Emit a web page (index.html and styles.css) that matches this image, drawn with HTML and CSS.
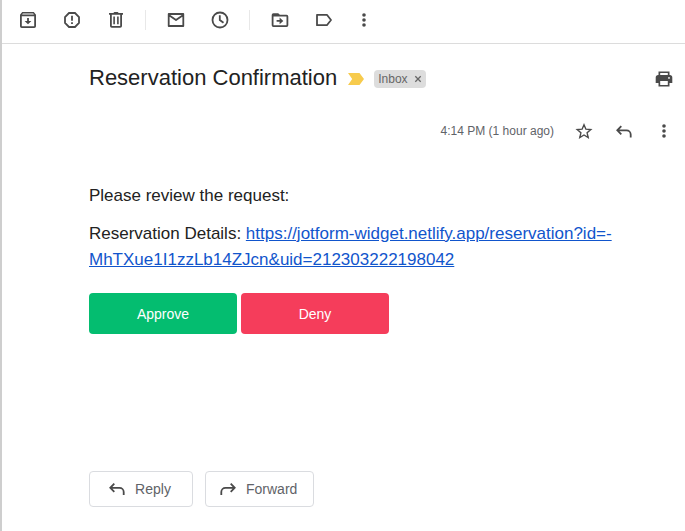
FILE: index.html
```html
<!DOCTYPE html>
<html lang="en">
<head>
<meta charset="utf-8">
<title>Reservation Confirmation</title>
<link rel="stylesheet" href="styles.css">
</head>
<body>
<div class="toolbar" role="toolbar" aria-label="Message actions">
  <div class="group">
    <button class="icon" aria-label="Archive"><svg viewBox="0 0 20 20"><path fill-rule="evenodd" d="M4.200 2h11.600L18 4.800v11.400a1.800 1.800 0 0 1-1.800 1.800H3.800A1.800 1.800 0 0 1 2 16.200V4.800zM4.800 3.500l-.7.9h11.800l-.7-.9zM3.800 6.300v9.900h12.400V6.300z"/><path d="M9.100 8h1.800v2.900h2.500L10 14.300l-3.400-3.400h2.500z"/></svg></button>
    <button class="icon" aria-label="Report spam"><svg viewBox="0 0 20 20"><path class="line" d="M7 3h6l4 4v6l-4 4H7l-4-4V7z"/><path d="M9.100 5.800h1.800v5H9.100zM9.100 12.200h1.800V14H9.100z"/></svg></button>
    <button class="icon" aria-label="Delete"><svg viewBox="0 0 20 20"><path fill-rule="evenodd" d="M3 3h4.300l1-1h3.400l1 1H17v1.700h-1V16a1.800 1.800 0 0 1-1.800 1.800H5.800A1.800 1.800 0 0 1 4 16V4.700H3zM5.800 4.700V16h8.400V4.700z"/><path d="M7.300 6.500h1.600v7.800H7.300zM11.100 6.500h1.600v7.800h-1.600z"/></svg></button>
  </div>
  <div class="group divided">
    <button class="icon" aria-label="Mark as unread"><svg viewBox="0 0 20 20"><path class="line round" d="M2.700 4h14.600v12H2.700zM2.700 5l7.300 5L17.300 5"/></svg></button>
    <button class="icon" aria-label="Snooze"><svg viewBox="0 0 20 20"><circle class="line" cx="10" cy="10" r="7.500"/><path class="line" d="M9.800 5.200V10l3.700 2.800"/></svg></button>
  </div>
  <div class="group divided">
    <button class="icon" aria-label="Move to"><svg viewBox="0 0 20 20"><path fill-rule="evenodd" d="M3.400 3.200h4.800l1.700 1.600h6.700a1.700 1.700 0 0 1 1.700 1.700v8.800a1.700 1.700 0 0 1-1.700 1.700H3.400a1.700 1.700 0 0 1-1.700-1.700V4.900a1.700 1.700 0 0 1 1.700-1.700zM3.500 6.500v8.700h13V6.500z"/><path d="M6.600 10.100h3V7.600l3.700 3.300-3.700 3.300v-2.500h-3z"/></svg></button>
    <button class="icon" aria-label="Labels"><svg viewBox="0 0 20 20"><path class="line round" d="M3 4.800h9.900l4.100 5.200-4.100 5.200H3z"/></svg></button>
    <button class="icon more" aria-label="More"><svg viewBox="0 0 20 20"><circle cx="10" cy="5" r="1.800"/><circle cx="10" cy="10" r="1.800"/><circle cx="10" cy="15" r="1.800"/></svg></button>
  </div>
</div>
<main class="message">
  <header class="subject">
    <h1>Reservation Confirmation</h1>
    <svg class="marker" viewBox="0 0 16 12"><path d="M0 0h11.500L16 6l-4.500 6H0l4.200-6z"/></svg>
    <span class="label">Inbox <button class="remove" aria-label="Remove Inbox label"><svg viewBox="0 0 8 8"><path d="M1.300 1.300l5.400 5.400M6.700 1.300L1.300 6.700"/></svg></button></span>
    <button class="icon print" aria-label="Print"><svg viewBox="0 0 20 20"><path fill-rule="evenodd" d="M4.500 2.500h11V6h.3a2.500 2.500 0 0 1 2.500 2.500V14h-2.800v3.500h-11V14H1.700V8.500A2.500 2.500 0 0 1 4.200 6h.3zM6.200 4v2h7.600V4zM6.200 12v4h7.600v-4zM15 8a.9.9 0 1 0 0 1.800.9.9 0 0 0 0-1.800z"/></svg></button>
  </header>
  <div class="meta">
    <time>4:14 PM (1 hour ago)</time>
    <button class="icon" aria-label="Star"><svg viewBox="0 0 20 20"><path class="line thin" d="M10 3.700l1.900 4.500 4.900.4-3.700 3.200 1.100 4.800-4.200-2.600-4.200 2.600 1.100-4.800-3.700-3.200 4.900-.4z"/></svg></button>
    <button class="icon" aria-label="Reply"><svg viewBox="0 0 20 20"><path class="line" d="M7.300 5.200L3.300 9.300l4 4.100M3.300 9.300h9.200a4.200 4.200 0 0 1 4.200 4.200v3"/></svg></button>
    <button class="icon" aria-label="More message options"><svg viewBox="0 0 20 20"><circle cx="10" cy="5" r="1.800"/><circle cx="10" cy="10" r="1.800"/><circle cx="10" cy="15" r="1.800"/></svg></button>
  </div>
  <div class="content">
    <p>Please review the request:</p>
    <p>Reservation Details: <a href="https://jotform-widget.netlify.app/reservation?id=-MhTXue1I1zzLb14ZJcn&amp;uid=212303222198042">https://jotform-widget.netlify.app/reservation?id=-<wbr>MhTXue1I1zzLb14ZJcn&amp;uid=212303222198042</a></p>
    <div class="choices">
      <button class="choice approve">Approve</button>
      <button class="choice deny">Deny</button>
    </div>
  </div>
  <footer class="responses">
    <button class="respond"><svg viewBox="0 0 20 20"><path class="line" d="M7.300 4.700L3.300 8.800l4 4.100M3.300 8.800h9.200a4.200 4.200 0 0 1 4.200 4.200v3"/></svg>Reply</button>
    <button class="respond"><svg viewBox="0 0 20 20"><path class="line" d="M12.700 4.700l4 4.100-4 4.100M16.700 8.800H7.500A4.200 4.200 0 0 0 3.300 13v3"/></svg>Forward</button>
  </footer>
</main>
</body>
</html>
```
FILE: styles.css
```css
* {
  box-sizing: border-box;
}

body {
  margin: 0;
  min-height: 100vh;
  border-left: 2px solid #cecece;
  background: #fff;
  color: #222;
  font-family: "Liberation Sans", Arial, sans-serif;
}

button {
  margin: 0;
  padding: 0;
  border: 0;
  background: none;
  font: inherit;
  cursor: pointer;
}

svg {
  display: block;
  flex: none;
  fill: #4a4a4a;
}

.line {
  fill: none;
  stroke: #4a4a4a;
  stroke-width: 1.8;
}

.thin {
  stroke-width: 1.4;
}

.round {
  stroke-linejoin: round;
}

.icon,
.icon svg {
  width: 20px;
  height: 20px;
  flex: none;
}

.toolbar {
  display: flex;
  align-items: flex-start;
  height: 44px;
  padding: 10px 16px;
  border-bottom: 1px solid #dcdcdc;
}

.group {
  display: flex;
  gap: 24px;
}

.divided {
  margin-left: 19px;
  padding-left: 20px;
  border-left: 1px solid #e8e8e8;
}

.more {
  margin-left: -4px;
}

.message {
  padding: 23px 11px 24px 87px;
}

.subject {
  display: flex;
  align-items: center;
  height: 24px;
}

h1 {
  margin: 0;
  font-size: 22px;
  font-weight: 400;
  line-height: 24px;
  padding-bottom: 2px;
}

.marker {
  width: 16px;
  height: 12px;
  margin-left: 11px;
  fill: #f7cb4d;
}

.label {
  display: flex;
  align-items: center;
  gap: 6px;
  height: 18px;
  margin-left: 10px;
  padding: 0 4px;
  border-radius: 4px;
  background: #ddd;
  color: #666;
  font-size: 12px;
  line-height: 18px;
}

.remove svg {
  width: 8px;
  height: 8px;
  stroke: #666;
  stroke-width: 1.3;
}

.print {
  margin-left: auto;
}

.meta {
  display: flex;
  align-items: center;
  justify-content: flex-end;
  gap: 20px;
  margin-top: 30px;
}

time {
  color: #5f6368;
  font-size: 12px;
  line-height: 20px;
}

.content {
  margin-top: 42px;
  font-size: 17px;
  line-height: 26px;
}

p {
  margin: 0 0 12px;
}

a {
  color: #15c;
}

.choices {
  display: flex;
  gap: 4px;
  margin-top: 20px;
}

.choice {
  width: 148px;
  height: 41px;
  border-radius: 4px;
  color: #fff;
  font-size: 14px;
}

.approve {
  background: #04bd70;
}

.deny {
  background: #f53d5b;
}

.responses {
  display: flex;
  gap: 12px;
  margin-top: 137px;
}

.respond {
  display: flex;
  align-items: center;
  justify-content: center;
  gap: 8px;
  min-width: 104px;
  height: 36px;
  padding: 0 16px 0 12px;
  border: 1px solid #dadce0;
  border-radius: 4px;
  color: #5f6368;
  font-size: 14px;
}

.respond svg {
  width: 20px;
  height: 20px;
}
```
